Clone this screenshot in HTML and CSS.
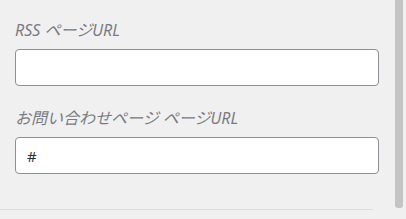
FILE: index.html
```html
<!DOCTYPE html>
<html lang="ja">
  <head>
    <meta charset="UTF-8" />
    <meta name="viewport" content="width=device-width, initial-scale=1.0" />
    <title>ページURL設定</title>
    <link rel="stylesheet" href="styles.css">
  </head>
  <body>
    <div class="panel">
      <div class="settings">
        <div class="field">
          <label class="field-label" for="rssUrl">RSS ページURL</label>
          <input class="field-input" id="rssUrl" type="text" value="" />
        </div>
        <div class="field">
          <label class="field-label" for="contactUrl">お問い合わせページ ページURL</label>
          <input class="field-input" id="contactUrl" type="text" value="#" />
        </div>
        <div class="separator"></div>
      </div>
      <div class="scrollbar">
        <div class="scroll-thumb"></div>
      </div>
    </div>
  </body>
</html>
```

FILE: styles.css
```css
body {
  margin: 0;
  background: #f0f0f0;
  font-family: "Noto Sans", "Noto Sans CJK JP", sans-serif;
  overflow: hidden;
}

.panel {
  display: flex;
  height: 219px;
}

.settings {
  flex: 1;
  display: flex;
  flex-direction: column;
  padding-top: 20px;
}

.field {
  display: flex;
  flex-direction: column;
  padding: 0 16px 0 15px;
  margin-bottom: 22px;
}

.field:nth-child(2) {
  margin-bottom: 35px;
}

.field-label {
  font-size: 16px;
  line-height: 20px;
  font-style: italic;
  color: #787c82;
  margin-bottom: 9px;
}

.field-input {
  box-sizing: border-box;
  height: 37px;
  border: 1px solid #8c8f94;
  border-radius: 4px;
  background: #fff;
  padding: 0 11px;
  font-family: "Noto Sans", sans-serif;
  font-size: 15px;
  color: #2c3338;
  margin: 0;
}

.separator {
  width: 373px;
  height: 1px;
  background: #dcdcde;
}

.scrollbar {
  width: 8px;
  margin-right: 3px;
  padding-bottom: 11px;
}

.scroll-thumb {
  height: 100%;
  background: #c4c4c4;
  border-radius: 0 0 3px 3px;
}
```
